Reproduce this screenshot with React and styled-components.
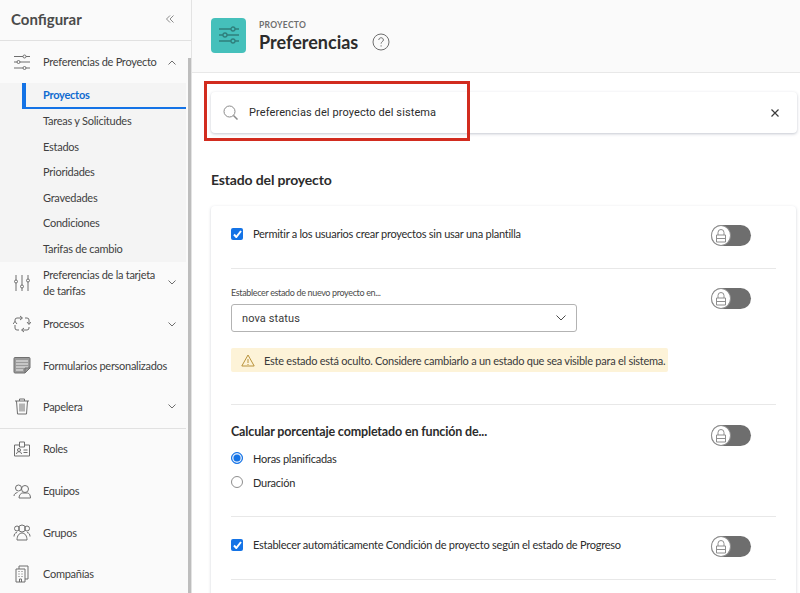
import React from 'react'
import styled, { createGlobalStyle } from 'styled-components'

const GlobalStyle = createGlobalStyle`
  html, body { margin: 0; padding: 0; height: 100%; overflow: hidden; }
  body { font-family: "Lato", "Noto Sans", sans-serif; color: #2c2c2c; background: #fff; }
  * { box-sizing: border-box; }
`

const Page = styled.div`
  display: flex;
  width: 800px;
  height: 593px;
  overflow: hidden;
`

const Sidebar = styled.aside`
  position: relative;
  flex: 0 0 192px;
  height: 593px;
  background: #fafafa;
  border-right: 1px solid #e3e3e3;
  overflow: hidden;
`

const Scrollbar = styled.div`
  position: absolute;
  right: 0;
  top: 58px;
  bottom: 0;
  width: 3px;
  background: #bdbdbd;
`

const SideHead = styled.div`
  height: 41px;
  display: flex;
  align-items: center;
  justify-content: space-between;
  padding: 0 17px 3px 11px;
  border-bottom: 1px solid #e1e1e1;
  font-size: 15px;
  font-weight: 700;
  color: #4b4b4b;
`

const NavItem = styled.div`
  display: grid;
  grid-template-columns: 43px 1fr 14px;
  align-items: center;
  justify-items: start;
  width: 186px;
  height: ${p => p.$h || 41.6}px;
  padding: 0 7px 0 0;
  font-size: 11px;
  letter-spacing: -0.27px;
  line-height: 16px;
  white-space: nowrap;
  color: #3f3f3f;
`

const IconCell = styled.span`
  display: flex;
  justify-content: center;
  justify-self: stretch;
  padding-left: 1px;
  color: #6e6e6e;
`

const ChevronCell = styled.span`
  display: flex;
  justify-self: center;
`

const SubList = styled.div`
  width: 186px;
  background: #f4f4f4;
`

const SubItem = styled.div`
  display: flex;
  align-items: center;
  height: 25.5px;
  margin-left: 22px;
  padding-left: ${p => (p.$active ? 17 : 21)}px;
  padding-bottom: 1px;
  font-size: 11px;
  letter-spacing: -0.25px;
  color: ${p => (p.$active ? '#0f6bd0' : '#3f3f3f')};
  font-weight: ${p => (p.$active ? 700 : 400)};
  border-left: ${p => (p.$active ? '4px solid #1473e6' : 'none')};
  border-bottom: ${p => (p.$active ? '2px solid #1473e6' : 'none')};
`

const SideDivider = styled.div`
  width: 186px;
  height: 1px;
  background: #e1e1e1;
`

const Main = styled.main`
  flex: 1;
  min-width: 0;
  position: relative;
`

const Header = styled.header`
  height: 73px;
  display: flex;
  align-items: center;
  gap: 13px;
  padding: 0 0 2px 19px;
  background: #fafafa;
  border-bottom: 1px solid #e8e8e8;
`

const AppIcon = styled.div`
  width: 35px;
  height: 35px;
  border-radius: 4px;
  background: #45c0bb;
  display: flex;
  align-items: center;
  justify-content: center;
`

const Titles = styled.div`
  display: flex;
  flex-direction: column;
  padding-top: 3px;
`

const Kicker = styled.div`
  font-size: 8.5px;
  font-weight: 700;
  letter-spacing: 0.3px;
  line-height: 11px;
  color: #6e6e6e;
`

const TitleRow = styled.div`
  display: flex;
  align-items: center;
  gap: 14px;
`

const Title = styled.h1`
  margin: -1px 0 0;
  font-size: 18px;
  line-height: 24px;
  font-weight: 700;
  color: #2c2c2c;
`

const Content = styled.div`
  padding: 19px 3px 0 19px;
`

const SearchBar = styled.div`
  display: flex;
  align-items: center;
  justify-content: space-between;
  height: 41px;
  padding: 0 18px 0 12px;
  background: #fff;
  border-radius: 4px;
  box-shadow: 0 1px 3px rgba(60, 70, 100, 0.3);
`

const SearchLeft = styled.div`
  display: flex;
  align-items: center;
  gap: 11px;
  font-family: "Roboto", sans-serif;
  font-size: 11px;
  letter-spacing: 0.1px;
  color: #2c2c2c;
`

const Highlight = styled.div`
  position: absolute;
  left: 12px;
  top: 81px;
  width: 266px;
  height: 60px;
  border: 3px solid #d22c1f;
  pointer-events: none;
`

const SectionTitle = styled.h2`
  margin: 37px 0 16px;
  font-size: 14px;
  letter-spacing: -0.15px;
  line-height: 20px;
  font-weight: 700;
  color: #2c2c2c;
`

const Card = styled.section`
  width: 585px;
  padding: 0 20px 40px;
  background: #fff;
  border-radius: 4px;
  box-shadow: 0 1px 3px rgba(60, 70, 100, 0.25);
`

const Row = styled.div`
  display: flex;
  justify-content: space-between;
  align-items: flex-start;
  height: ${p => p.$h}px;
  padding: ${p => p.$top}px 25px 0 0;
  border-bottom: 1px solid #e8e8e8;
`

const Check = styled.span`
  flex: 0 0 12px;
  width: 12px;
  height: 12px;
  border-radius: 2px;
  background: #1473e6;
  display: flex;
  align-items: center;
  justify-content: center;
`

const CheckLabel = styled.label`
  display: flex;
  align-items: center;
  gap: 10px;
  height: 17px;
  font-size: 11px;
  letter-spacing: -0.25px;
  color: #2c2c2c;
`

const Toggle = styled.div`
  position: relative;
  flex: 0 0 40px;
  width: 40px;
  height: 21px;
  border-radius: 11px;
  background: #6e6e6e;
`

const Knob = styled.div`
  position: absolute;
  left: 0;
  top: 0;
  width: 20px;
  height: 21px;
  border-radius: 50%;
  background: #fff;
  border: 1px solid #8e8e8e;
  display: flex;
  align-items: center;
  justify-content: center;
`

const Field = styled.div`
  display: flex;
  flex-direction: column;
  margin-top: -2px;
`

const FieldLabel = styled.div`
  font-size: 9px;
  letter-spacing: -0.35px;
  line-height: 14px;
  color: #4b4b4b;
  margin-bottom: 4px;
`

const Select = styled.div`
  display: flex;
  align-items: center;
  justify-content: space-between;
  width: 346px;
  height: 28px;
  padding: 0 10px;
  border: 1px solid #b3b3b3;
  border-radius: 3px;
  font-family: "Roboto", sans-serif;
  font-size: 11px;
  letter-spacing: 0.1px;
  color: #3a3a3a;
`

const Warning = styled.div`
  display: flex;
  align-items: center;
  gap: 9px;
  width: 437px;
  height: 24px;
  margin-top: 16px;
  padding: 0 0 0 10px;
  background: #fdf3d8;
  border-radius: 2px;
  font-size: 11px;
  letter-spacing: -0.25px;
  white-space: nowrap;
  color: #3a3a3a;

  svg { flex: none; }
`

const GroupTitle = styled.div`
  font-size: 12.5px;
  letter-spacing: -0.15px;
  line-height: 18px;
  font-weight: 700;
  color: #2c2c2c;
  margin: -2px 0 5px;
`

const RadioRow = styled.label`
  display: flex;
  align-items: center;
  gap: 10px;
  height: 24px;
  font-size: 11px;
  letter-spacing: -0.25px;
  color: #2c2c2c;
`

const Radio = styled.span`
  width: 12px;
  height: 12px;
  border-radius: 50%;
  background: ${p => (p.$on ? '#1473e6' : '#fff')};
  border: 1px solid ${p => (p.$on ? '#1473e6' : '#8e8e8e')};
  box-shadow: ${p => (p.$on ? 'inset 0 0 0 1.5px #dbe9fb' : 'none')};
`

const Glyph = ({ children, w = 24, h = 20 }) => (
  <svg width={w} height={h} viewBox={`0 0 ${w} ${h}`} fill="none" stroke="currentColor" strokeWidth="1">
    {children}
  </svg>
)

const SlidersH = () => (
  <Glyph w={18} h={16}>
    <path d="M1 2.5h9M13 2.5h4M1 8h3M7 8h10M1 14h9M13 14h4" />
    <circle cx="11.5" cy="2.5" r="1.5" /><circle cx="5.5" cy="8" r="1.5" /><circle cx="11.5" cy="14" r="1.5" />
  </Glyph>
)
const SlidersV = () => (
  <Glyph w={18} h={18}>
    <path d="M3 1v5M3 9v8M9 1v10M9 14v3M15 1v4M15 8v9" />
    <circle cx="3" cy="7.5" r="1.5" /><circle cx="9" cy="12.5" r="1.5" /><circle cx="15" cy="6.5" r="1.5" />
  </Glyph>
)
const Loop = () => (
  <Glyph w={18} h={18}>
    <path d="M2 7V5a2 2 0 0 1 2-2h5M7 1l2.5 2L7 5M12 3h2a2 2 0 0 1 2 2v4M14 7l2 2.5L18 7M16 12v1a2 2 0 0 1-2 2H9M11 13l-2.500 2 2.500 2M6 15H4a2 2 0 0 1-2-2v-3M0 9l2-2.500L4 9" />
  </Glyph>
)
const FormIcon = () => (
  <Glyph w={18} h={17}>
    <path d="M1 1.5a1 1 0 0 1 1-1h14a1 1 0 0 1 1 1V11l-5 5H2a1 1 0 0 1-1-1z" fill="#9a9a9a" stroke="#707070" />
    <path d="M3 4h12M3 7h12M3 10h12M3 13h7" stroke="#f2f2f2" />
    <path d="M12 16v-5h5" stroke="#707070" />
  </Glyph>
)
const Trash = () => (
  <Glyph w={16} h={17}>
    <path d="M1 3h14M5.5 3V1h5v2M2.5 3l1 13h9l1-13M6 5.5v8M8 5.5v8M10 5.5v8" />
  </Glyph>
)
const Badge = () => (
  <Glyph w={18} h={16}>
    <path d="M6 4H1.5v11h15V4H12M6.5 1h5v5h-5z" />
    <circle cx="6" cy="9" r="1.5" /><path d="M3.5 13c0-3 5-3 5 0M10.5 9h4M10.5 11.5h4" />
  </Glyph>
)
const Team = () => (
  <Glyph w={18} h={15}>
    <circle cx="5.5" cy="4" r="3" /><circle cx="12" cy="5" r="3.5" />
    <path d="M1 12c0-2 1.5-3 3.5-3.5M6 14c0-3 2-5 3.5-5h5c1.5 0 3 2 3 5z" />
  </Glyph>
)
const Group = () => (
  <Glyph w={18} h={17}>
    <circle cx="4" cy="4.5" r="2.5" /><circle cx="14" cy="4.5" r="2.5" /><circle cx="9" cy="4.5" r="3.5" />
    <path d="M1 12.5c0-2 1-4 3-4M17 12.5c0-2-1-4-3-4M4 16c0-4 2-7 5-7s5 3 5 7z" />
  </Glyph>
)
const Building = () => (
  <Glyph w={14} h={18}>
    <path d="M1 4h9v13H1zM4 4V1h9v13h-3M4.5 17v-3h2v3" />
    <path d="M3.5 6.5h1M6.5 6.5h1M3.5 9h1M6.5 9h1M3.5 11.5h1M6.5 11.5h1" />
  </Glyph>
)
const Chevron = ({ up }) => (
  <ChevronCell>
    <svg width="8" height="5" viewBox="0 0 8 5" fill="none" stroke="#6e6e6e">
      <path d={up ? 'M.5 4.5 4 1l3.5 3.5' : 'M.5.5 4 4 7.5.5'} />
    </svg>
  </ChevronCell>
)
const DoubleChevron = () => (
  <svg width="8" height="8" viewBox="0 0 8 8" fill="none" stroke="#8a8a8a">
    <path d="M4 .5.5 4 4 7.5M7.5.5 4 4l3.5 3.5" />
  </svg>
)
const Lock = () => (
  <svg width="12" height="14" viewBox="0 0 12 14" fill="none" stroke="#8e8e8e">
    <path d="M3 6V3.5a3 3 0 0 1 6 0V6M1.5 6h9v7h-9zM1.5 9.500h9" />
  </svg>
)
const Tick = () => (
  <svg width="9" height="8" viewBox="0 0 9 8" fill="none" stroke="#fff" strokeWidth="2">
    <path d="M1 4.5 3.3 7 8 1" />
  </svg>
)

const LockToggle = () => (
  <Toggle>
    <Knob><Lock /></Knob>
  </Toggle>
)

const navTop = [
  { label: 'Procesos', icon: <Loop />, chevron: true },
  { label: 'Formularios personalizados', icon: <FormIcon /> },
  { label: 'Papelera', icon: <Trash />, chevron: true },
]

const navBottom = [
  { label: 'Roles', icon: <Badge /> },
  { label: 'Equipos', icon: <Team /> },
  { label: 'Grupos', icon: <Group /> },
  { label: 'Compañías', icon: <Building /> },
]

const subItems = ['Tareas y Solicitudes', 'Estados', 'Prioridades', 'Gravedades', 'Condiciones', 'Tarifas de cambio']

const App = () => {
  return (
    <Page>
      <GlobalStyle />
      <Sidebar>
        <SideHead>
          Configurar
          <DoubleChevron />
        </SideHead>
        <NavItem $h={42}>
          <IconCell><SlidersH /></IconCell>
          Preferencias de Proyecto
          <Chevron up />
        </NavItem>
        <SubList>
          <SubItem $active>Proyectos</SubItem>
          {subItems.map(s => <SubItem key={s}>{s}</SubItem>)}
        </SubList>
        <NavItem $h={42}>
          <IconCell><SlidersV /></IconCell>
          <span>Preferencias de la tarjeta<br />de tarifas</span>
          <Chevron />
        </NavItem>
        {navTop.map(n => (
          <NavItem key={n.label} $h={41.4}>
            <IconCell>{n.icon}</IconCell>
            {n.label}
            {n.chevron ? <Chevron /> : <span />}
          </NavItem>
        ))}
        <SideDivider />
        {navBottom.map(n => (
          <NavItem key={n.label}>
            <IconCell>{n.icon}</IconCell>
            {n.label}
            <span />
          </NavItem>
        ))}
        <Scrollbar />
      </Sidebar>
      <Main>
        <Header>
          <AppIcon>
            <svg width="22" height="20" viewBox="0 0 22 20" fill="none" stroke="#2f7f7c" strokeWidth="1.3">
              <path d="M1 4h12M17 4h4M1 10h4M9 10h12M1 16h12M17 16h4" />
              <circle cx="15" cy="4" r="2" /><circle cx="7" cy="10" r="2" /><circle cx="15" cy="16" r="2" />
            </svg>
          </AppIcon>
          <Titles>
            <Kicker>PROYECTO</Kicker>
            <TitleRow>
              <Title>Preferencias</Title>
              <svg width="18" height="18" viewBox="0 0 18 18" fill="none" stroke="#6e6e6e">
                <circle cx="9" cy="9" r="8" />
                <path d="M6.8 7c0-3 4.600-3 4.600 0 0 1.600-2.300 1.700-2.300 3.600M9.100 12.300v1.200" />
              </svg>
            </TitleRow>
          </Titles>
        </Header>
        <Content>
          <SearchBar>
            <SearchLeft>
              <svg width="15" height="15" viewBox="0 0 15 15" fill="none" stroke="#8a8a8a">
                <circle cx="6.5" cy="6.5" r="5.5" />
                <path d="m10.5 10.5 4 4" strokeWidth="1.5" />
              </svg>
              Preferencias del proyecto del sistema
            </SearchLeft>
            <svg width="8" height="8" viewBox="0 0 8 8" fill="none" stroke="#3a3a3a" strokeWidth="1.2">
              <path d="m.5.5 7 7M7.500.5l-7 7" />
            </svg>
          </SearchBar>
          <SectionTitle>Estado del proyecto</SectionTitle>
          <Card>
            <Row $h={63} $top={19}>
              <CheckLabel><Check><Tick /></Check>Permitir a los usuarios crear proyectos sin usar una plantilla</CheckLabel>
              <LockToggle />
            </Row>
            <Row $h={136} $top={19}>
              <Field>
                <FieldLabel>Establecer estado de nuevo proyecto en...</FieldLabel>
                <Select>
                  nova status
                  <svg width="10" height="6" viewBox="0 0 10 6" fill="none" stroke="#4b4b4b">
                    <path d="m.5.5 4.500 4.500L9.500.5" />
                  </svg>
                </Select>
                <Warning>
                  <svg width="14" height="13" viewBox="0 0 14 13" fill="none" stroke="#b8923a">
                    <path d="M7 1 .8 12h12.400zM7 5v4M7 10v1" />
                  </svg>
                  Este estado está oculto. Considere cambiarlo a un estado que sea visible para el sistema.
                </Warning>
              </Field>
              <LockToggle />
            </Row>
            <Row $h={112} $top={20}>
              <div>
                <GroupTitle>Calcular porcentaje completado en función de...</GroupTitle>
                <RadioRow><Radio $on />Horas planificadas</RadioRow>
                <RadioRow><Radio />Duración</RadioRow>
              </div>
              <LockToggle />
            </Row>
            <Row $h={63} $top={19}>
              <CheckLabel><Check><Tick /></Check>Establecer automáticamente Condición de proyecto según el estado de Progreso</CheckLabel>
              <LockToggle />
            </Row>
          </Card>
        </Content>
        <Highlight />
      </Main>
    </Page>
  )
}

export default App
